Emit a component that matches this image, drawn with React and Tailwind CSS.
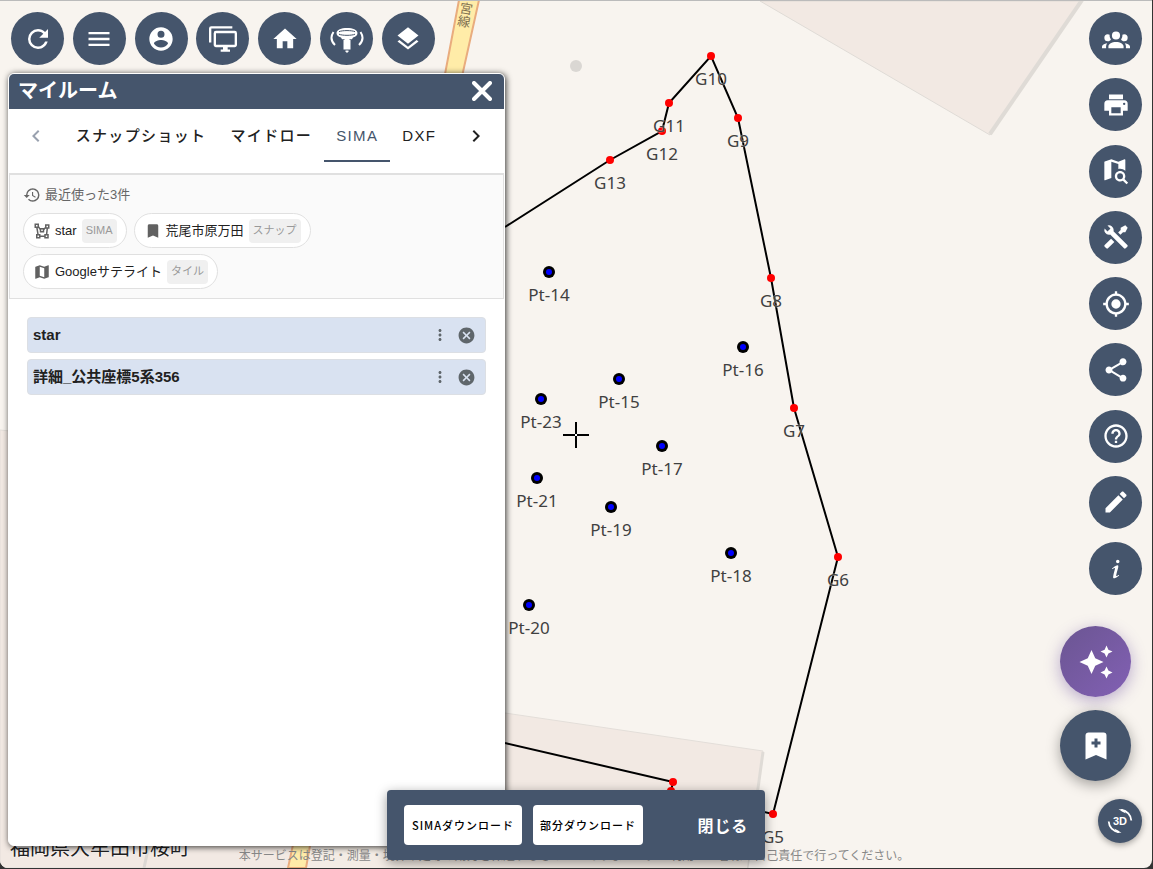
import { useState } from 'react';
import {
  MdBookmark,
  MdCancel,
  MdChevronLeft,
  MdChevronRight,
  MdHelpOutline,
  MdHistory,
  MdMap,
  MdMoreVert,
  MdShare,
} from 'react-icons/md';

const paths = {
  refresh:
    'M17.65,6.35C16.2,4.9 14.21,4 12,4A8,8 0 0,0 4,12A8,8 0 0,0 12,20C15.73,20 18.84,17.45 19.73,14H17.65C16.83,16.33 14.61,18 12,18A6,6 0 0,1 6,12A6,6 0 0,1 12,6C13.66,6 15.14,6.69 16.22,7.78L13,11H20V4L17.65,6.35Z',
  menu: 'M3,6H21V8H3V6M3,11H21V13H3V11M3,16H21V18H3V16Z',
  account:
    'M12,19.2C9.5,19.2 7.29,17.92 6,16C6.03,14 10,12.9 12,12.9C14,12.9 17.97,14 18,16C16.71,17.92 14.5,19.2 12,19.2M12,5A3,3 0 0,1 15,8A3,3 0 0,1 12,11A3,3 0 0,1 9,8A3,3 0 0,1 12,5M12,2A10,10 0 0,0 2,12A10,10 0 0,0 12,22A10,10 0 0,0 22,12C22,6.47 17.5,2 12,2Z',
  monitors:
    'M22,17V7H6V17H22M22,5A2,2 0 0,1 24,7V17C24,18.11 23.1,19 22,19H16V21H18V23H10V21H12V19H6C4.89,19 4,18.11 4,17V7A2,2 0 0,1 6,5H22M2,3V15H0V3A2,2 0 0,1 2,1H20V3H2Z',
  home: 'M10,20V14H14V20H19V12H22L12,3L2,12H5V20H10Z',
  layers:
    'M12,16L19.36,10.27L21,9L12,2L3,9L4.63,10.27M12,18.54L4.62,12.81L3,14.07L12,21.07L21,14.07L19.37,12.8L12,18.54Z',
  group:
    'M12,5.5A3.5,3.5 0 0,1 15.5,9A3.5,3.5 0 0,1 12,12.5A3.5,3.5 0 0,1 8.5,9A3.5,3.5 0 0,1 12,5.5M5,8C5.56,8 6.08,8.15 6.53,8.42C6.38,9.85 6.8,11.27 7.66,12.38C7.16,13.34 6.16,14 5,14A3,3 0 0,1 2,11A3,3 0 0,1 5,8M19,8A3,3 0 0,1 22,11A3,3 0 0,1 19,14C17.84,14 16.84,13.34 16.34,12.38C17.2,11.27 17.62,9.85 17.47,8.42C17.92,8.15 18.44,8 19,8M5.5,18.25C5.5,16.18 8.41,14.5 12,14.5C15.59,14.5 18.5,16.18 18.5,18.25V20H5.5V18.25M0,20V18.5C0,17.11 1.89,15.94 4.45,15.6C3.86,16.28 3.5,17.22 3.5,18.25V20H0M24,20H20.5V18.25C20.5,17.22 20.14,16.28 19.55,15.6C22.11,15.94 24,17.11 24,18.5V20Z',
  printer:
    'M18,3H6V7H18M19,12A1,1 0 0,1 18,11A1,1 0 0,1 19,10A1,1 0 0,1 20,11A1,1 0 0,1 19,12M16,19H8V14H16M19,8H5A3,3 0 0,0 2,11V17H6V21H18V17H22V11A3,3 0 0,0 19,8Z',
  mapSearch:
    'M15.5,12C18,12 20,14 20,16.5C20,17.38 19.75,18.21 19.31,18.9L22.39,22L21,23.39L17.88,20.32C17.19,20.75 16.37,21 15.5,21C13,21 11,19 11,16.5C11,14 13,12 15.5,12M15.5,14A2.5,2.5 0 0,0 13,16.5A2.5,2.5 0 0,0 15.5,19A2.5,2.5 0 0,0 18,16.5A2.5,2.5 0 0,0 15.5,14M19.5,2A0.5,0.5 0 0,1 20,2.5V11.81C18.83,10.69 17.25,10 15.5,10C14.96,10 14.5,10.06 14,10.18V6.1L8,4V17.9L2.66,19.97L2.5,20A0.5,0.5 0 0,1 2,19.5V4.38C2,4.15 2.15,3.97 2.36,3.9L8,2L14,4.1L19.34,2H19.5Z',
  tools:
    'M21.71,20.29L20.29,21.71A1,1 0 0,1 18.88,21.71L7,9.85A3.81,3.81 0 0,1 6,10A4,4 0 0,1 2.22,4.7L4.76,7.24L5.29,6.71L6.71,5.29L7.24,4.76L4.7,2.22A4,4 0 0,1 10,6A3.81,3.81 0 0,1 9.85,7L21.71,18.88A1,1 0 0,1 21.71,20.29M2.29,18.88A1,1 0 0,0 2.29,20.29L3.71,21.71A1,1 0 0,0 5.12,21.71L10.59,16.25L7.76,13.42M20,2L16,4V6L13.83,8.17L15.83,10.17L18,8H20L22,4Z',
  gps: 'M12,8A4,4 0 0,1 16,12A4,4 0 0,1 12,16A4,4 0 0,1 8,12A4,4 0 0,1 12,8M3.05,13H1V11H3.05C3.5,6.83 6.83,3.5 11,3.05V1H13V3.05C17.17,3.5 20.5,6.83 20.95,11H23V13H20.95C20.5,17.17 17.17,20.5 13,20.95V23H11V20.95C6.83,20.5 3.5,17.17 3.05,13M12,5A7,7 0 0,0 5,12A7,7 0 0,0 12,19A7,7 0 0,0 19,12A7,7 0 0,0 12,5Z',
  pencil:
    'M20.71,7.04C21.1,6.65 21.1,6 20.71,5.63L18.37,3.29C18,2.9 17.35,2.9 16.96,3.29L15.12,5.12L18.87,8.87M3,17.25V21H6.75L17.81,9.93L14.06,6.18L3,17.25Z',
  info: 'M13.5,4A1.5,1.5 0 0,0 12,5.5A1.5,1.5 0 0,0 13.5,7A1.5,1.5 0 0,0 15,5.5A1.5,1.5 0 0,0 13.5,4M13.14,8.77C11.95,8.87 8.7,11.46 8.7,11.46C8.5,11.61 8.56,11.6 8.72,11.88C8.88,12.15 8.86,12.17 9.05,12.04C9.25,11.91 9.58,11.7 10.13,11.36C12.25,10 10.47,13.14 9.56,18.43C9.2,21.05 11.56,19.7 12.17,19.3C12.77,18.91 14.38,17.8 14.54,17.69C14.76,17.54 14.6,17.42 14.43,17.17C14.31,17 14.19,17.12 14.19,17.12C13.54,17.55 12.35,18.45 12.19,17.88C12,17.31 13.22,13.4 13.89,10.71C14,10.07 14.3,8.67 13.14,8.77Z',
  sparkle:
    'M19,1L17.74,3.75L15,5L17.74,6.26L19,9L20.25,6.26L23,5L20.25,3.75M9,4L6.5,9.5L1,12L6.5,14.5L9,20L11.5,14.5L17,12L11.5,9.5M19,15L17.74,17.74L15,19L17.74,20.25L19,23L20.25,20.25L23,19L20.25,17.74',
  bookmarkPlus:
    'M17,3A2,2 0 0,1 19,5V21L12,18L5,21V5C5,3.89 5.9,3 7,3H17M11,7V9H9V11H11V13H13V11H15V9H13V7H11Z',
  polygon:
    'M2,2V8H4.28L5.57,16H4V22H10V20.06L15,20.05V22H21V16H19.17L20,9H22V3H16V6.53L14.8,8H9.59L8,5.82V2M4,4H6V6H4M18,5H20V7H18M6.31,8H7.11L9,10.59V14H15V10.91L16.57,9H18L17.16,16H15V18.06H10V16H7.6M11,10H13V12H11M6,18H8V20H6M17,18H19V20H17',
};

const Icon = ({ name, className = 'size-7' }) => (
  <svg viewBox="0 0 24 24" fill="currentColor" fillRule="evenodd" className={className} aria-hidden="true">
    <path d={paths[name]} />
  </svg>
);

const AntennaIcon = () => (
  <svg viewBox="0 0 34 28" className="h-7 w-[34px]" fill="none" stroke="currentColor" aria-hidden="true">
    <path d="M3.500 7C.5 11.500 .8 16 5 20M30.500 7c3 4.500 2.700 9-1.500 13" strokeWidth="2" />
    <path d="M6.500 8C7 4.500 11 3 17 3s10 1.500 10.500 5c0 2.200-1.500 3.700-4.500 4.400l-1 1.900H12l-1-1.900c-3-.7-4.500-2.200-4.500-4.400z" fill="currentColor" stroke="none" />
    <path d="M9 6.700c3-1.500 13-1.500 16 0M9 9.200c3 1.500 13 1.500 16 0" stroke="#475569" strokeWidth="1" />
    <path d="M14.500 13.500h5v1.500h1v9.500h-7V15h1zM15.500 25.500h3v1.500h-1v1h-1v-1h-1z" fill="currentColor" stroke="none" />
  </svg>
);

const topTools = [
  { label: '再読み込み', icon: <Icon name="refresh" className="size-[30px]" /> },
  { label: 'メニュー', icon: <Icon name="menu" /> },
  { label: 'アカウント', icon: <Icon name="account" /> },
  { label: '2画面', icon: <Icon name="monitors" /> },
  { label: 'ホーム', icon: <Icon name="home" /> },
  { label: 'GNSS', icon: <AntennaIcon /> },
  { label: 'レイヤー', icon: <Icon name="layers" /> },
];

const sideTools = [
  { label: 'グループ', icon: <Icon name="group" /> },
  { label: '印刷', icon: <Icon name="printer" /> },
  { label: '地図検索', icon: <Icon name="mapSearch" /> },
  { label: 'ツール', icon: <Icon name="tools" /> },
  { label: '現在地', icon: <Icon name="gps" /> },
  { label: '共有', icon: <MdShare className="size-7" /> },
  { label: 'ヘルプ', icon: <MdHelpOutline className="size-7" /> },
  { label: '編集', icon: <Icon name="pencil" /> },
  { label: '情報', icon: <Icon name="info" /> },
];

const tabs = ['スナップショット', 'マイドロー', 'SIMA', 'DXF'];

const recents = [
  { name: 'star', type: 'SIMA', icon: <Icon name="polygon" className="size-[18px]" /> },
  { name: '荒尾市原万田', type: 'スナップ', icon: <MdBookmark className="size-[18px]" /> },
  { name: 'Googleサテライト', type: 'タイル', icon: <MdMap className="size-[18px]" /> },
];

const files = ['star', '詳細_公共座標5系356'];

const boundary = [
  { id: 'G13', x: 610, y: 160 },
  { id: 'G12', x: 662, y: 131 },
  { id: 'G11', x: 669, y: 103 },
  { id: 'G10', x: 711, y: 56 },
  { id: 'G9', x: 738, y: 118 },
  { id: 'G8', x: 771, y: 278 },
  { id: 'G7', x: 794, y: 408 },
  { id: 'G6', x: 838, y: 557 },
  { id: 'G5', x: 773, y: 814 },
];

const points = [
  { id: 'Pt-14', x: 549, y: 272 },
  { id: 'Pt-15', x: 619, y: 379 },
  { id: 'Pt-16', x: 743, y: 347 },
  { id: 'Pt-23', x: 541, y: 399 },
  { id: 'Pt-17', x: 662, y: 446 },
  { id: 'Pt-21', x: 537, y: 478 },
  { id: 'Pt-19', x: 611, y: 507 },
  { id: 'Pt-18', x: 731, y: 553 },
  { id: 'Pt-20', x: 529, y: 605 },
];

const MapCanvas = () => (
  <svg
    viewBox="0 0 1152 868"
    preserveAspectRatio="xMidYMid slice"
    className="absolute inset-0 size-full font-['Noto_Sans','Noto_Sans_CJK_JP',sans-serif]"
  >
    {/* buildings */}
    <path d="M760 1L990 135L1081 1z" fill="#f2e9e3" stroke="#dfdbd6" />
    <path d="M990 134L1082 0" stroke="#dfdbd6" strokeWidth="4" />
    <path d="M0 430L10 431V640L505 713L763 751L747 868H0z" fill="#f2e9e3" stroke="#e3ded9" />
    <path d="M763 752L747 868" stroke="#dfdbd6" strokeWidth="3" />
    <path d="M310 846h440l-3 22H303z" fill="#f3ece5" />
    <path d="M150 840L144 868" stroke="#dcd8d4" strokeWidth="3" />
    {/* roads */}
    <path d="M459 0L442 90H459L479 0z" fill="#ffeca8" stroke="#e9ac7e" strokeWidth="2" />
    <path d="M294 840L288 868H306L311 840z" fill="#ffeca8" stroke="#e9ac7e" strokeWidth="2" />
    <g transform="rotate(10 464 10)" fontSize="13" fill="#807050" textAnchor="middle">
      <text x="466" y="13">宮</text>
      <text x="466" y="26">線</text>
    </g>
    <circle cx="576" cy="66" r="6" fill="#dad7d3" />

    {/* parcel boundary */}
    <polyline
      points={`505,227 ${boundary.map((p) => `${p.x},${p.y}`).join(' ')} 671,791 673,782 505,743`}
      fill="none"
      stroke="#000"
      strokeWidth="2"
    />
    <circle cx="673" cy="782" r="4" fill="red" />
    <circle cx="671" cy="791" r="4" fill="red" />
    {boundary.map((p) => (
      <circle key={p.id} cx={p.x} cy={p.y} r="4" fill="red" />
    ))}
    {points.map((p) => (
      <g key={p.id}>
        <circle cx={p.x} cy={p.y} r="6" />
        <circle cx={p.x} cy={p.y} r="3" fill="#00f" />
      </g>
    ))}
    <g fontSize="17" fill="#404040" stroke="#f8f4ef" strokeOpacity="0.5" paintOrder="stroke" textAnchor="middle">
      {[...boundary, ...points].map((p) => (
        <text key={p.id} x={p.x} y={p.y + 29}>
          {p.id}
        </text>
      ))}
    </g>

    <path d="M563 435h26M576 422v26" stroke="#000" strokeWidth="2" />
    <path d="M575 435h2" stroke="#fff" strokeWidth="2" />
    <path d="M0 0H1152" stroke="#bbb" strokeWidth="2" />
  </svg>
);

const RoundButton = ({ label, children }) => (
  <button
    type="button"
    aria-label={label}
    className="flex size-[53px] shrink-0 items-center justify-center rounded-full bg-slate-600 text-white"
  >
    {children}
  </button>
);

const MyRoom = () => {
  const [activeTab, setActiveTab] = useState('SIMA');

  return (
    <section className="absolute top-[73px] bottom-[22px] left-2 flex w-[497px] flex-col overflow-hidden rounded-md border border-white bg-white shadow-[1px_1px_6px_rgba(0,0,0,0.8)]">
      <header className="flex h-[35px] items-center justify-between bg-slate-600 pr-3 pb-[2px] pl-[9px] text-white">
        <h2 className="text-xl font-bold">マイルーム</h2>
        <button type="button" aria-label="閉じる">
          <svg viewBox="0 0 20 20" className="size-5" stroke="currentColor" strokeWidth="4" aria-hidden="true">
            <path d="M2 2L18 18M18 2L2 18" strokeLinecap="round" />
          </svg>
        </button>
      </header>

      <nav className="mb-[11px] flex h-[53px] items-stretch">
        <button type="button" aria-label="前へ" className="flex w-[55px] items-center justify-center text-gray-400">
          <MdChevronLeft className="size-6" />
        </button>
        <div className="flex flex-1" role="tablist">
          {tabs.map((tab) => (
            <button
              key={tab}
              type="button"
              role="tab"
              aria-selected={tab === activeTab}
              onClick={() => setActiveTab(tab)}
              className={`border-b-2 px-3 pt-1 text-[15px] font-medium tracking-[0.09em] whitespace-nowrap ${
                tab === activeTab ? 'border-slate-600 text-slate-600' : 'border-transparent text-[#212121]'
              }`}
            >
              {tab}
            </button>
          ))}
        </div>
        <button type="button" aria-label="次へ" className="flex w-14 items-center justify-center text-[#212121]">
          <MdChevronRight className="size-6" />
        </button>
      </nav>

      <div className="border border-t-2 border-[#e0e0e0] bg-[#fafafa] px-[13px] pt-2 pb-[9px]">
        <div className="flex h-[23px] items-center gap-1 text-[13px] text-[#666]">
          <MdHistory className="size-[18px]" />
          最近使った3件
        </div>
        <div className="mt-[7px] flex flex-wrap gap-x-[7px] gap-y-[6px]">
          {recents.map((item) => (
            <button
              key={item.name}
              type="button"
              className="flex h-[35px] items-center gap-1 rounded-full border border-[#e0e0e0] bg-white px-[9px] text-[13px] text-[#212121]"
            >
              <span className="text-[#616161]">{item.icon}</span>
              {item.name}
              <span className="ml-px flex h-6 items-center rounded bg-[#f0f0f0] px-1 text-[11px] text-[#999]">
                {item.type}
              </span>
            </button>
          ))}
        </div>
      </div>

      <ul className="flex flex-1 flex-col gap-[6px] px-[18px] pt-[18px]">
        {files.map((file) => (
          <li
            key={file}
            className="flex h-9 items-center rounded border border-[#dcdfe4] bg-[#d9e2f1] pr-[9px] pl-[5px] text-[15px] font-bold text-[#212121]"
          >
            <span className="flex-1">{file}</span>
            <button type="button" aria-label={`${file}のメニュー`} className="mr-2 text-[#5f666b]">
              <MdMoreVert className="size-[18px]" />
            </button>
            <button type="button" aria-label={`${file}を削除`} className="text-[#5f666b]">
              <MdCancel className="size-[19px]" />
            </button>
          </li>
        ))}
      </ul>
    </section>
  );
};

const DownloadBar = () => (
  <div className="absolute inset-x-0 bottom-2 mx-auto flex h-[70px] w-[378px] items-center rounded bg-slate-600 px-[17px] font-['Noto_Sans_CJK_JP',sans-serif] shadow-[0_3px_12px_rgba(0,0,0,0.4)]">
    <button type="button" className="h-10 rounded bg-white px-2 text-[11px] font-medium tracking-[0.09em] whitespace-nowrap text-black">
      SIMAダウンロード
    </button>
    <button type="button" className="ml-[11px] h-10 rounded bg-white px-[7px] text-[11px] font-medium tracking-[0.09em] whitespace-nowrap text-black">
      部分ダウンロード
    </button>
    <button type="button" className="ml-auto text-base font-bold tracking-wider text-white">
      閉じる
    </button>
  </div>
);

export default function App() {
  return (
    <div className="h-screen bg-[#333] pr-px pb-px font-['Liberation_Sans','Noto_Sans_CJK_JP',sans-serif]">
      <main className="relative h-full overflow-hidden rounded-b-lg bg-[#f8f4ef]">
        <MapCanvas />

        <p className="absolute bottom-[6px] left-[10px] text-xl whitespace-nowrap text-[#222] [text-shadow:0_0_2px_#fff,0_0_2px_#fff]">
          福岡県大牟田市桜町
        </p>
        <p className="absolute inset-x-0 bottom-1 pr-1 text-center text-xs whitespace-nowrap text-[#888]">
          本サービスは登記・測量・境界確定等の効力を保証するものではありません。ご利用はお客様の自己責任で行ってください。
        </p>

        <div className="absolute top-3 left-[11px] flex w-[424px] justify-between">
          {topTools.map((tool) => (
            <RoundButton key={tool.label} label={tool.label}>
              {tool.icon}
            </RoundButton>
          ))}
        </div>

        <div className="absolute top-3 right-[10px] flex h-[583px] flex-col justify-between">
          {sideTools.map((tool) => (
            <RoundButton key={tool.label} label={tool.label}>
              {tool.icon}
            </RoundButton>
          ))}
        </div>

        <div className="absolute right-[21px] bottom-[87px] flex flex-col gap-[13px] text-white">
          <button
            type="button"
            aria-label="AI"
            className="flex size-[71px] items-center justify-center rounded-full bg-linear-135 from-[#6b5592] to-[#8260b4] shadow-[0_4px_16px_rgba(90,60,150,0.4)]"
          >
            <Icon name="sparkle" className="size-9" />
          </button>
          <button
            type="button"
            aria-label="ブックマークを追加"
            className="flex size-[71px] items-center justify-center rounded-full bg-slate-600 shadow-[0_4px_14px_rgba(0,0,0,0.35)]"
          >
            <Icon name="bookmarkPlus" className="size-9" />
          </button>
        </div>

        <button
          type="button"
          aria-label="3D表示"
          className="absolute right-[10px] bottom-[25px] flex size-[44px] items-center justify-center rounded-full bg-slate-600 text-white shadow-[0_2px_6px_rgba(0,0,0,0.35)]"
        >
          <svg viewBox="0 0 26 26" className="size-[26px]" fill="none" stroke="currentColor" aria-hidden="true">
            <path d="M14 2C20 2.500 24 7 24.300 12.500M12 24C6 23.500 2 19 1.700 13.500" strokeWidth="1.800" />
            <path d="M11.500 1.200H16L18.500 5.500zM14.500 24.800H10L7.500 20.500z" fill="currentColor" stroke="none" />
            <text x="13" y="17" fontSize="11" fontWeight="700" textAnchor="middle" fill="currentColor" stroke="none">
              3D
            </text>
          </svg>
        </button>

        <MyRoom />
        <DownloadBar />
      </main>
    </div>
  );
}
